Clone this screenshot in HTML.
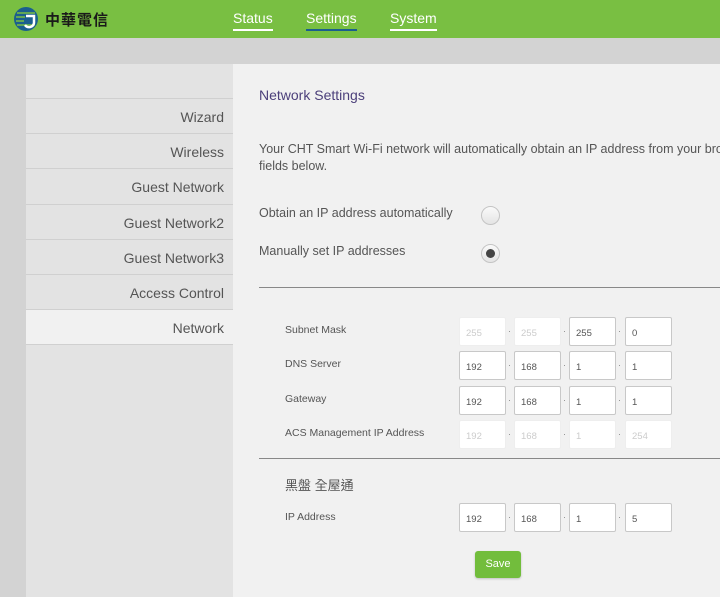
<!DOCTYPE html>
<html><head><meta charset="utf-8"><style>
*{margin:0;padding:0;box-sizing:border-box}
body{width:720px;height:597px;overflow:hidden;background:#d3d3d3;font-family:"Liberation Sans","Noto Sans CJK TC",sans-serif;position:relative}
.hdr{position:absolute;left:0;top:0;width:720px;height:38px;background:#79bf42}
.nav{position:absolute;top:10px;color:#fff;font-size:14px;padding-bottom:2px;border-bottom:2px solid #fff;line-height:17px}
.side{position:absolute;left:26px;top:64px;width:207px;height:533px;background:#e3e3e3}
.it{position:absolute;left:0;width:207px;height:35px;border-top:1px solid #d0d0d0;text-align:right;padding-right:9px;font-size:14px;color:#555;line-height:36px}
.main{position:absolute;left:233px;top:64px;width:487px;height:533px;background:#f1f1f1}
.t{position:absolute;color:#555;font-size:12.5px}
.lbl{position:absolute;left:285px;font-size:10.5px;color:#555}
.in{position:absolute;width:47px;height:29px;background:#fff;border:1px solid #c8c8c8;border-radius:2px;font-size:9.5px;color:#555;padding-left:6px;line-height:32px}
.in.d{color:#ccc;border-color:#eee}
.dot{position:absolute;font-size:9px;color:#888}
.hr{position:absolute;left:259px;width:461px;height:1px;background:#888}
.rad{position:absolute;width:19px;height:19px;border-radius:50%;border:1px solid #c4c4c4;background:linear-gradient(#fafafa,#e4e4e4)}
</style></head><body>
<div class="hdr">
<svg style="position:absolute;left:12px;top:5px" width="28" height="28" viewBox="0 0 28 28"><circle cx="14" cy="14" r="12" fill="#1b5f8e"/><path d="M5 8h18M4 12h9M4 16h8M5 20h18" stroke="#79bf42" stroke-width="1.5"/><path d="M14 11h8v7a5 5 0 0 1-9 2" fill="none" stroke="#fff" stroke-width="2.5"/></svg>
<div style="position:absolute;left:45px;top:9px;font-size:15px;color:#1a1a1a;font-weight:bold;letter-spacing:1px">中華電信</div>
<div class="nav" style="left:233px">Status</div>
<div class="nav" style="left:306px;border-color:#1b5f8e">Settings</div>
<div class="nav" style="left:390px">System</div>
</div>
<div class="side">
<div class="it" style="top:34px">Wizard</div>
<div class="it" style="top:69px">Wireless</div>
<div class="it" style="top:104px">Guest Network</div>
<div class="it" style="top:140px">Guest Network2</div>
<div class="it" style="top:175px">Guest Network3</div>
<div class="it" style="top:210px">Access Control</div>
<div class="it" style="top:245px;background:#f1f1f1">Network</div>
<div class="it" style="top:280px;height:1px"></div>
</div>
<div class="main"></div>
<div class="t" style="left:259px;top:87px;font-size:14px;color:#4b3f7a">Network Settings</div>
<div class="t" style="left:259px;top:141px;white-space:nowrap;line-height:17px">Your CHT Smart Wi-Fi network will automatically obtain an IP address from your bro<br>fields below.</div>
<div class="t" style="left:259px;top:206px">Obtain an IP address automatically</div>
<div class="rad" style="left:481px;top:206px"></div>
<div class="t" style="left:259px;top:244px">Manually set IP addresses</div>
<div class="rad" style="left:481px;top:244px"><div style="position:absolute;left:4px;top:4px;width:9px;height:9px;border-radius:50%;background:#444"></div></div>
<div class="hr" style="top:287px"></div>
<div class="lbl" style="top:324px">Subnet Mask</div>
<div class="lbl" style="top:358px">DNS Server</div>
<div class="lbl" style="top:393px">Gateway</div>
<div class="lbl" style="top:427px">ACS Management IP Address</div>
<div class="hr" style="top:458px"></div>
<div class="t" style="left:285px;top:475px;font-size:13px">黑盤 全屋通</div>
<div class="lbl" style="top:511px">IP Address</div>
<div id="f"></div>
<div style="position:absolute;left:475px;top:551px;width:46px;height:27px;background:#72bd3c;border-radius:3px;color:#fff;font-size:11px;text-align:center;line-height:27px;box-shadow:0 1px 2px rgba(0,0,0,.2)">Save</div>
<script>
var rows=[[317,['255','255','255','0'],[1,1,0,0]],[351,['192','168','1','1'],[0,0,0,0]],[386,['192','168','1','1'],[0,0,0,0]],[420,['192','168','1','254'],[1,1,1,1]],[503,['192','168','1','5'],[0,0,0,0]]];
var xs=[459,514,569,625],h='';
rows.forEach(function(r){for(var i=0;i<4;i++){h+='<div class="in'+(r[2][i]?' d':'')+'" style="left:'+xs[i]+'px;top:'+r[0]+'px">'+r[1][i]+'</div>';if(i<3)h+='<div class="dot" style="left:'+(xs[i]+49)+'px;top:'+(r[0]+9)+'px">·</div>';}});
document.getElementById('f').innerHTML=h;
</script>
</body></html>
